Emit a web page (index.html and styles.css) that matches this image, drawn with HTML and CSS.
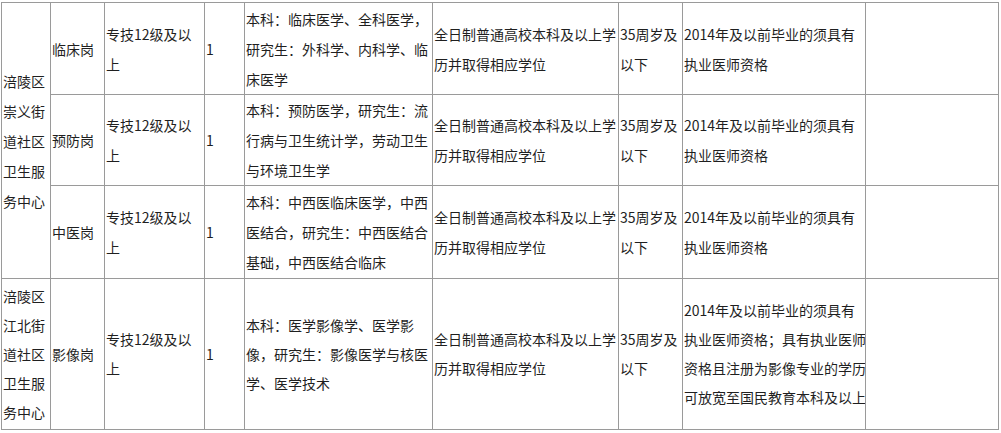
FILE: index.html
```html
<!DOCTYPE html>
<html lang="zh-CN">
<head>
<meta charset="utf-8">
<title>岗位表</title>
<link rel="stylesheet" href="styles.css">
</head>
<body>
<table class="jobs">
  <colgroup>
    <col class="c-unit">
    <col class="c-post">
    <col class="c-level">
    <col class="c-num">
    <col class="c-major">
    <col class="c-edu">
    <col class="c-age">
    <col class="c-other">
    <col class="c-note">
  </colgroup>
  <tbody>
    <tr class="r1">
      <td rowspan="3">涪陵区<br>崇义街<br>道社区<br>卫生服<br>务中心</td>
      <td>临床岗</td>
      <td>专技12级及以<br>上</td>
      <td>1</td>
      <td>本科<span class="pc">：</span>临床医学、全科医学，<br>研究生<span class="pc">：</span>外科学、内科学、临<br>床医学</td>
      <td>全日制普通高校本科及以上学<br>历并取得相应学位</td>
      <td>35周岁及<br>以下</td>
      <td>2014年及以前毕业的须具有<br>执业医师资格</td>
      <td></td>
    </tr>
    <tr class="r2">
      <td>预防岗</td>
      <td>专技12级及以<br>上</td>
      <td>1</td>
      <td>本科<span class="pc">：</span>预防医学，研究生<span class="pc">：</span>流<br>行病与卫生统计学，劳动卫生<br>与环境卫生学</td>
      <td>全日制普通高校本科及以上学<br>历并取得相应学位</td>
      <td>35周岁及<br>以下</td>
      <td>2014年及以前毕业的须具有<br>执业医师资格</td>
      <td></td>
    </tr>
    <tr class="r3">
      <td>中医岗</td>
      <td>专技12级及以<br>上</td>
      <td>1</td>
      <td>本科<span class="pc">：</span>中西医临床医学，中西<br>医结合，研究生<span class="pc">：</span>中西医结合<br>基础，中西医结合临床</td>
      <td>全日制普通高校本科及以上学<br>历并取得相应学位</td>
      <td>35周岁及<br>以下</td>
      <td>2014年及以前毕业的须具有<br>执业医师资格</td>
      <td></td>
    </tr>
    <tr class="r4">
      <td>涪陵区<br>江北街<br>道社区<br>卫生服<br>务中心</td>
      <td>影像岗</td>
      <td>专技12级及以<br>上</td>
      <td>1</td>
      <td>本科<span class="pc">：</span>医学影像学、医学影<br>像，研究生<span class="pc">：</span>影像医学与核医<br>学、医学技术</td>
      <td>全日制普通高校本科及以上学<br>历并取得相应学位</td>
      <td>35周岁及<br>以下</td>
      <td>2014年及以前毕业的须具有<br>执业医师资格<span class="pc">；</span>具有执业医师<br>资格且注册为影像专业的学历<br>可放宽至国民教育本科及以上</td>
      <td></td>
    </tr>
  </tbody>
</table>
</body>
</html>
```

FILE: styles.css
```css
html, body {
  margin: 0;
  padding: 0;
  background: #ffffff;
}

body {
  font-family: "Noto Sans CJK SC", "Microsoft YaHei", "Noto Sans", sans-serif;
  font-size: 14px;
  color: #1f1f1f;
}

.jobs {
  margin: 2px 0 0 1px;
  width: 997px;
  table-layout: fixed;
  border-collapse: collapse;
}

.jobs td {
  border: 1px solid #9a9a9a;
  padding: 0 0 0 1px;
  line-height: 30px;
  vertical-align: middle;
  text-align: left;
  white-space: nowrap;
  overflow: hidden;
}

.jobs .pc {
  font-family: "Noto Sans CJK TC", "Noto Sans CJK SC", sans-serif;
}

.r1 { height: 92px; }
.r2 { height: 91px; }
.r3 { height: 93px; }
.r4 { height: 151px; }

.jobs .r4 td { line-height: 29px; }

.c-unit { width: 49px; }
.c-post { width: 54px; }
.c-level { width: 100px; }
.c-num { width: 40px; }
.c-major { width: 188px; }
.c-edu { width: 186px; }
.c-age { width: 64px; }
.c-other { width: 183px; }
.c-note { width: 133px; }
```
